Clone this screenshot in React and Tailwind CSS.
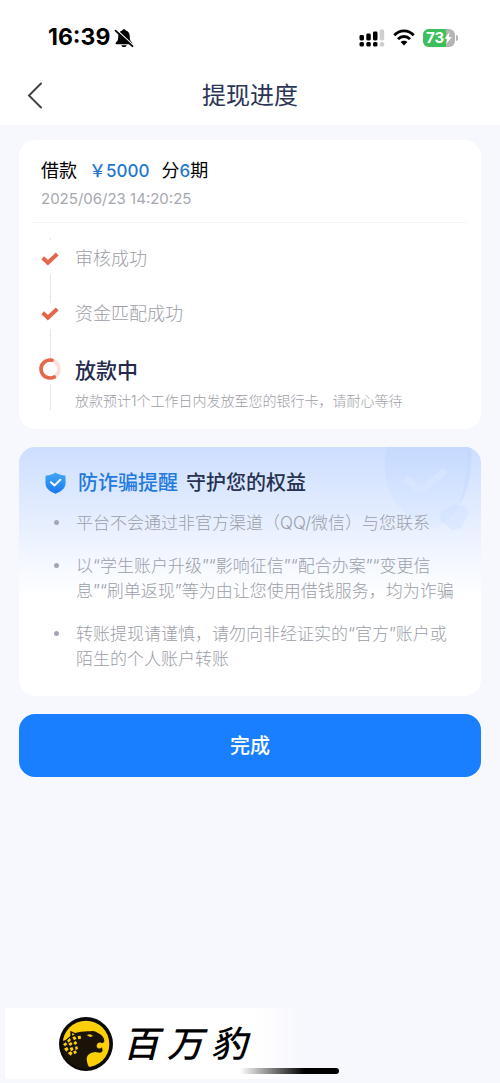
const steps = [
  { title: '审核成功', status: 'done' },
  { title: '资金匹配成功', status: 'done' },
  {
    title: '放款中',
    status: 'active',
    desc: '放款预计1个工作日内发放至您的银行卡，请耐心等待',
  },
];

const tips = [
  '平台不会通过非官方渠道（QQ/微信）与您联系',
  '以“学生账户升级”“影响征信”“配合办案”“变更信息”“刷单返现”等为由让您使用借钱服务，均为诈骗',
  '转账提现请谨慎，请勿向非经证实的“官方”账户或陌生的个人账户转账',
];

const MutedBell = () => (
  <svg width="20" height="20" viewBox="0 0 20 20" aria-hidden="true">
    <path d="M10 1.200c.9 0 1.600.6 1.800 1.400 2.500.8 3.900 2.800 3.900 5.200 0 4 .7 5.100 2.200 6.500.9.900.6 1.900-.5 1.900H2.600c-1.100 0-1.400-1-.5-1.900C3.600 12.900 4.300 11.800 4.300 7.800c0-2.400 1.400-4.400 3.900-5.200.2-.8.9-1.400 1.800-1.400z" />
    <path d="M7.300 17.200h5.400c-.4 1.200-1.400 1.900-2.700 1.900s-2.300-.7-2.700-1.900z" />
    <path d="M2.200 1.600 19.300 17.200" stroke="#fff" strokeWidth="1.300" />
    <path d="M1.500 2.600 18.400 18.200" stroke="#000" strokeWidth="1.800" strokeLinecap="round" />
  </svg>
);

const Signal = () => (
  <svg width="26" height="18" viewBox="0 0 26 18" aria-hidden="true">
    <rect x="0.500" y="6" width="4.500" height="5.500" rx="1.400" />
    <rect x="7.300" y="4.500" width="4.500" height="7" rx="1.400" />
    <rect x="14" y="2.500" width="4.500" height="9" rx="1.400" />
    <rect x="20.700" y="0.500" width="4.500" height="11" rx="1.400" fill="#cfcfcf" />
    <rect x="0.500" y="13" width="4.500" height="4.500" rx="1.500" />
    <rect x="7.300" y="13" width="4.500" height="4.500" rx="1.500" />
    <rect x="14" y="13" width="4.500" height="4.500" rx="1.500" />
    <rect x="20.700" y="13" width="4.500" height="4.500" rx="1.500" fill="#cfcfcf" />
  </svg>
);

const Wifi = () => (
  <svg width="22" height="17" viewBox="0 0 22 17" fill="none" stroke="#000" strokeWidth="2.800" aria-hidden="true">
    <path d="M1.300 6.200C6.600.5 15.400.5 20.700 6.200" />
    <path d="M5 10.100c3.300-3.500 8.700-3.500 12 0" />
    <path d="M11 16.500 7.600 13c1.800-1.800 5-1.800 6.800 0z" fill="#000" stroke="none" />
  </svg>
);

const Battery = () => (
  <div className="flex items-center" role="img" aria-label="73%">
    <div className="relative flex h-[18px] w-8 items-center overflow-hidden rounded-md bg-[#b4b4b4] pl-[3px]">
      <div className="absolute inset-y-0 left-0 w-[73%] bg-[#3cc05c]"></div>
      <span className="relative text-[15px] leading-none font-bold text-white">73</span>
      <svg className="relative" width="8" height="12" viewBox="0 0 8 12" fill="#fff" aria-hidden="true">
        <path d="M5.600 0 .4 6.800h3L2.200 12 7.700 4.900h-3z" />
      </svg>
    </div>
    <div className="ml-px h-[6px] w-[2px] rounded-r-full bg-[#b4b4b4]"></div>
  </div>
);

const StepIcon = ({ status }) => {
  if (status === 'done') {
    return (
      <svg width="22" height="22" viewBox="0 0 22 22" fill="none" aria-hidden="true">
        <path d="m3.700 9.800 5.200 5 9.300-8.800" stroke="#e4674c" strokeWidth="4" />
      </svg>
    );
  }
  return (
    <svg width="22" height="22" viewBox="0 0 22 22" fill="none" strokeWidth="3.600" aria-hidden="true">
      <circle cx="11" cy="11" r="9" stroke="#fbdfd9" />
      <path d="M13 2.200A9 9 0 1 0 15.200 19" stroke="#e4674c" strokeLinecap="round" />
    </svg>
  );
};

const ShieldIcon = () => (
  <svg width="21" height="22" viewBox="0 0 21 22" fill="none" aria-hidden="true">
    <defs>
      <linearGradient id="shield" x1="0" y1="0" x2="0" y2="1">
        <stop offset="0" stopColor="#43a8f5" />
        <stop offset="1" stopColor="#1878f3" />
      </linearGradient>
    </defs>
    <path d="M10.500.4c2.800 1.700 5.700 2.700 9 3 .6 0 1 .5 1 1v6.800c0 5-4.200 8.300-10 10.500C4.700 19.500.5 16.200.5 11.200V4.400c0-.5.4-1 1-1 3.300-.3 6.200-1.300 9-3z" fill="url(#shield)" />
    <path d="m6 10.200 3.600 3.200 5.700-5.600" stroke="#fff" strokeWidth="2" strokeLinecap="round" strokeLinejoin="round" />
  </svg>
);

const ShieldBackdrop = () => (
  <svg className="absolute top-0 right-0" width="98" height="90" viewBox="0 0 98 90" fill="none" aria-hidden="true">
    <defs>
      <linearGradient id="backdrop" x1="0" y1="0" x2="0" y2="1">
        <stop offset="0" stopColor="#bdd5fe" stopOpacity=".5" />
        <stop offset="1" stopColor="#d3e3ff" stopOpacity=".25" />
      </linearGradient>
    </defs>
    <path d="M4 0h84c1 20-1 38-8 52-6 13-15 23-28 30C22 72-6 50 4 0z" fill="url(#backdrop)" />
    <path d="M84 0h4c1 20-1 38-8 52l-4 4c6-16 9-34 8-56z" fill="#b9d2fd" opacity=".2" />
    <path d="m22 31 16 13 24-20" stroke="#dce8ff" strokeWidth="7" strokeLinejoin="round" opacity=".6" />
    <path d="m58 64 14-7 4 2 6-1 4 8-8 15-9 2-12-10z" fill="#c9dcff" opacity=".35" />
  </svg>
);

const LeopardLogo = () => (
  <svg width="54" height="54" viewBox="28 23 162 162" aria-hidden="true">
    <defs>
      <clipPath id="disc">
        <circle cx="109" cy="104" r="74" />
      </clipPath>
    </defs>
    <circle cx="109" cy="104" r="81" fill="#0b0a08" />
    <circle cx="109" cy="104" r="70" fill="#fccf08" />
    <g clipPath="url(#disc)">
      <path d="M28 98 48 92 62 80V64l14 7q19-6 46-5 12-3 22 4 14 6 19 18l1 9-6 5q-8-5-15 1-5 9 2 14 7 2 12-3l2 10q-3 6-9 6l-14-2q-22 2-25 19 0 18 12 34l-12 12H28z" fill="#1a1308" />
      <path d="m111 77 10-2 10 5-10 3z" fill="#fccf08" />
      <g fill="#fccf08">
        <path d="m67 71 8 4-7 4zM68 84l8-3 5 7-8 5zM52 94l8-8 4 6-7 8zM40 105l8-6 5 6-7 6zM56 104l8-6 5 6-7 6zM71 100l7-5 5 7-7 5zM84 80l9-1 1 9-8 2z" />
        <path d="m43 118 9-5 5 7-7 7zM60 116l8-3 4 8-8 5zM54 131l9-5 6 6-6 7zM76 112l7-1 2 8-7 3zM70 127l8-4 4 7-7 5z" />
      </g>
    </g>
  </svg>
);

const App = () => {
  return (
    <div className="flex min-h-screen flex-col bg-[#f7f8fe] font-[Inter,'Noto_Sans_CJK_SC',sans-serif]">
      <header className="bg-white pb-2">
        <div className="flex h-[75px] items-center justify-between pr-[42px] pl-12">
          <div className="flex items-center gap-1">
            <span className="text-[23px] leading-none font-bold text-black">16:39</span>
            <MutedBell />
          </div>
          <div className="flex items-center gap-2">
            <Signal />
            <Wifi />
            <Battery />
          </div>
        </div>
        <div className="grid h-[42px] grid-cols-[1fr_auto_1fr] items-center px-6">
          <button type="button" aria-label="返回" className="justify-self-start">
            <svg width="22" height="28" viewBox="0 0 22 28" fill="none" aria-hidden="true">
              <path d="M17 1.500 5 13.500 17 25.500" stroke="#444" strokeWidth="2" strokeLinecap="round" />
            </svg>
          </button>
          <h1 className="text-2xl leading-7 font-normal text-[#2c3454]">提现进度</h1>
        </div>
      </header>

      <main className="flex flex-col gap-[18px] px-[19px] pt-[15px]">
        <section className="rounded-2xl bg-white px-[14px] pb-[19px]">
          <div className="border-b border-[#f4f4f7] px-2 pt-[19px] pb-[11px]">
            <div className="flex items-center gap-3 text-lg leading-6 text-black">
              <span>借款</span>
              <span className="text-[17px] font-medium text-[#2377cf]">￥5000</span>
              <span>
                分<span className="text-[17px] font-medium text-[#2377cf]">6</span>期
              </span>
            </div>
            <time className="mt-1 block text-[15px] leading-6 text-[#a6a8b0]">2025/06/23 14:20:25</time>
          </div>

          <div className="px-[6px] pt-[15px]">
            <div className="mb-2 flex w-[22px] justify-center">
              <div className="h-[2px] w-px bg-[#e6e6ea]"></div>
            </div>
            <ol>
              {steps.map((step) => (
                <li key={step.title} className="flex gap-[14px]">
                  <div className="flex flex-col items-center gap-1">
                    <StepIcon status={step.status} />
                    <div className="w-px flex-1 bg-[#e6e6ea]"></div>
                  </div>
                  {step.status === 'active' ? (
                    <div>
                      <h2 className="text-[21px] leading-[26px] font-medium text-[#232a4d]">{step.title}</h2>
                      <p className="mt-2 text-sm leading-[18px] font-light text-[#9c9ea6]">{step.desc}</p>
                    </div>
                  ) : (
                    <p className="pb-[33px] text-lg leading-[22px] font-light text-[#9c9ea6]">{step.title}</p>
                  )}
                </li>
              ))}
            </ol>
          </div>
        </section>

        <section className="relative overflow-hidden rounded-2xl bg-linear-to-b from-[#cddeff] to-white to-60% pt-[22px] pr-[18px] pb-6 pl-[26px]">
          <ShieldBackdrop />
          <div className="relative flex items-center gap-3">
            <ShieldIcon />
            <h2 className="text-xl leading-7 font-medium text-[#26324f]">
              <span className="mr-2 text-[#1f7be0]">防诈骗提醒</span>
              守护您的权益
            </h2>
          </div>
          <ul className="relative mt-[14px] flex flex-col gap-[18px]">
            {tips.map((tip) => (
              <li key={tip} className="flex gap-[17px] pl-[9px] text-[17px] leading-[25px] font-light text-[#9c9ea8]">
                <span className="mt-[9px] size-[5px] shrink-0 rounded-full bg-[#a4a7b2]"></span>
                <p>{tip}</p>
              </li>
            ))}
          </ul>
        </section>

        <button type="button" className="h-[63px] rounded-2xl bg-[#1a7fff] text-xl font-medium text-white">
          完成
        </button>
      </main>

      <footer className="relative mt-auto mb-1 ml-[5px] flex h-[71px] items-center gap-[10px] bg-linear-to-r from-white from-50% to-transparent to-60% pl-[54px]">
        <LeopardLogo />
        <div className="flex gap-2 text-4xl leading-none font-medium text-black italic">
          <span>百</span>
          <span>万</span>
          <span>豹</span>
        </div>
        <div className="absolute bottom-[5px] left-[235px] h-[6px] w-[99px] rounded-full bg-linear-to-r from-transparent to-black to-65%"></div>
      </footer>
    </div>
  );
};

export default App;
